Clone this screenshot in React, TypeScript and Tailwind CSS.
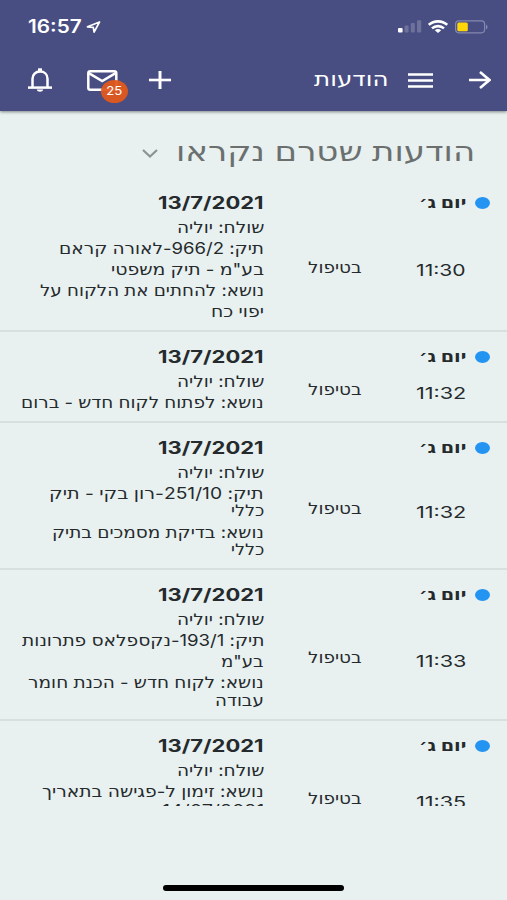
import React, { useLayoutEffect, useRef } from 'react';

type Line = { text: string; width: number; margin?: string };
type Message = { time: string; height: string; lines: Line[] };

const SENDER: Line = { text: 'שולח: יוליה', width: 87 };

const MESSAGES: Message[] = [
  {
    time: '11:30',
    height: 'h-[154px]',
    lines: [
      SENDER,
      { text: 'תיק: 966/2-לאורה קראם', width: 205 },
      { text: 'בע"מ - תיק משפטי', width: 153 },
      { text: 'נושא: להחתים את הלקוח על', width: 224 },
      { text: 'יפוי כח', width: 53 },
    ],
  },
  {
    time: '11:32',
    height: 'h-[91px]',
    lines: [SENDER, { text: 'נושא: לפתוח לקוח חדש - ברום', width: 243 }],
  },
  {
    time: '11:32',
    height: 'h-[147px]',
    lines: [
      SENDER,
      { text: 'תיק: 251/10-רון בקי - תיק', width: 215 },
      { text: 'כללי', width: 33, margin: '-mt-1 mb-px' },
      { text: 'נושא: בדיקת מסמכים בתיק', width: 212 },
      { text: 'כללי', width: 33, margin: '-mt-1' },
    ],
  },
  {
    time: '11:33',
    height: 'h-[151px]',
    lines: [
      SENDER,
      { text: 'תיק: 193/1-נקספלאס פתרונות', width: 243 },
      { text: 'בע"מ', width: 43 },
      { text: 'נושא: לקוח חדש - הכנת חומר', width: 236 },
      { text: 'עבודה', width: 49, margin: '-mt-[3px]' },
    ],
  },
  {
    time: '11:35',
    height: 'h-[131px]',
    lines: [
      SENDER,
      { text: 'נושא: זימון ל-פגישה בתאריך', width: 222 },
      { text: '14/07/2021', width: 102, margin: '-mt-[2px]' },
    ],
  },
];

// Stretches a single line of text horizontally to a given width
function Fit({ width, className = '', children }: { width: number; className?: string; children: React.ReactNode }) {
  const ref = useRef<HTMLSpanElement>(null);

  useLayoutEffect(() => {
    const el = ref.current;
    if (el) el.style.transform = `scaleX(${width / el.offsetWidth})`;
  }, [width]);

  return (
    <span ref={ref} className={`block w-max shrink-0 whitespace-nowrap origin-right ${className}`}>
      {children}
    </span>
  );
}

function StatusBar() {
  return (
    <div dir="ltr" className="flex h-[53px] items-center justify-between pl-7 pr-[19px]">
      <div className="flex items-center">
        <div dir="rtl" className="flex w-[54px]">
          <Fit width={54} className="text-[18px] font-semibold leading-none">16:57</Fit>
        </div>
        <svg className="ml-1 h-3 w-[15px]" viewBox="0 0 15 12" fill="none" stroke="currentColor" strokeWidth="1.7" strokeLinejoin="round">
          <path d="M13.5 1 1.5 5.8l5.8.5.8 4.8z" />
        </svg>
      </div>
      <div className="flex items-center">
        <svg className="h-[13px] w-6" viewBox="0 0 24 13" fill="currentColor">
          <rect x="0" y="8" width="4.6" height="4.5" rx="1" />
          <g opacity=".2">
            <rect x="6.6" y="5.5" width="4" height="7" rx="1" />
            <rect x="12.8" y="3" width="4" height="9.5" rx="1" />
            <rect x="19" y="0.3" width="4.2" height="12.2" rx="1" />
          </g>
        </svg>
        <svg className="ml-1.5 h-[13px] w-5" viewBox="0 0 20 13" fill="none" stroke="currentColor" strokeWidth="2.6">
          <path d="M.8 4.9C6 .2 14 .2 19.2 4.9" />
          <path d="M4 8.4c3.4-3 8.6-3 12 0" />
          <path d="m6.8 10.3 3.2 2.6 3.2-2.6c-1.8-1.6-4.6-1.6-6.4 0z" fill="currentColor" stroke="none" />
        </svg>
        <svg className="ml-[7px] h-[14px] w-[33px]" viewBox="0 0 33 14">
          <rect x=".6" y=".8" width="29" height="12" rx="3.2" fill="none" stroke="#8588b0" strokeWidth="1.2" />
          <rect x="2.3" y="2.4" width="10.5" height="8.8" rx="1.5" fill="#ffd60a" />
          <path d="M31 4.5c2 .8 2 4.2 0 5z" fill="#8588b0" />
        </svg>
      </div>
    </div>
  );
}

function Toolbar() {
  return (
    <div dir="ltr" className="flex h-[58px] items-center pb-1 pl-7">
      <svg className="h-6 w-6" viewBox="0 0 24 24" fill="none" stroke="currentColor" strokeWidth="2.5">
        <path d="M4.5 19.5V10.8C4.5 6.5 7.5 3.6 12 3.6s7.5 2.9 7.5 7.2v8.7" />
        <path d="M0 19.6h24" />
        <path d="M12 .3v3" strokeWidth="4" />
        <path d="M8.8 21.5h6.4c-.3 3-6.1 3-6.4 0z" fill="currentColor" stroke="none" />
      </svg>
      <div className="relative ml-[35px]">
        <svg className="h-[21px] w-[31px]" viewBox="0 0 31 21" fill="none" stroke="currentColor" strokeWidth="2.5">
          <rect x="1.3" y="1.3" width="28" height="18.4" rx="2" />
          <path d="m1.8 3.2 13.4 7.8 13.4-7.8" />
        </svg>
        <div className="absolute left-[14px] top-[10px] flex h-[23px] w-[27px] items-center justify-center rounded-[50%] bg-[#e2591b]/95">
          <span className="scale-x-[1.1] text-[12px] leading-none">25</span>
        </div>
      </div>
      <svg className="ml-[31px] h-[18px] w-[22px]" viewBox="0 0 22 18" fill="none" stroke="currentColor">
        <path d="M11 0v18" strokeWidth="3" />
        <path d="M0 9h22" strokeWidth="2.6" />
      </svg>
      <div dir="rtl" className="ml-[143px] flex w-[75px] pb-0.5">
        <Fit width={75} className="text-[20px] font-medium leading-none">הודעות</Fit>
      </div>
      <svg className="ml-[19px] h-[15px] w-[25px]" viewBox="0 0 25 15" stroke="currentColor" strokeWidth="2.6">
        <path d="M0 1.5h25M0 7.5h25M0 13.5h25" />
      </svg>
      <svg className="ml-[36px] h-[18px] w-[22px]" viewBox="0 0 22 18" fill="none" stroke="currentColor" strokeWidth="2.6">
        <path d="M0 9h20.500M11 1l9.500 8-9.500 8" />
      </svg>
    </div>
  );
}

function MessageRow({ message }: { message: Message }) {
  return (
    <div className={`flex shrink-0 border-b-2 border-[#d8dfdf] pr-[17px] ${message.height}`}>
      <div className="mt-[19px] h-3 w-[15px] rounded-[50%] bg-[#2494f2]" />
      <div className="relative ml-[56px] mr-[9px] w-[48px]">
        <div className="mt-3 flex h-6 items-center">
          <Fit width={47} className="text-[16px] font-bold leading-none">יום ג׳</Fit>
        </div>
        <div className="absolute right-0 top-1/2 mt-2 h-4">
          <Fit width={50} className="text-[16px] leading-none">{message.time}</Fit>
        </div>
      </div>
      <div className="flex w-[54px] items-center pt-[25px]">
        <Fit width={54} className="text-[16px] leading-none">בטיפול</Fit>
      </div>
      <div className="mr-11 mt-[13px] flex flex-col">
        <div className="mb-px flex h-6 items-center">
          <Fit width={106} className="text-[17px] font-bold leading-none">13/7/2021</Fit>
        </div>
        {message.lines.map((line, i) => (
          <div key={i} className={`flex h-[21px] items-center ${line.margin ?? ''}`}>
            <Fit width={line.width} className="text-[16px] leading-none">{line.text}</Fit>
          </div>
        ))}
      </div>
    </div>
  );
}

export default function App() {
  return (
    <div
      dir="rtl"
      className="flex h-[900px] w-[507px] flex-col overflow-hidden bg-[#e8f0f0] font-[Inter,'DejaVu_Sans',sans-serif] text-[#252a2c]"
    >
      <header className="h-[111px] shrink-0 bg-[#484e82] text-white shadow-[0_1px_3px_rgba(0,0,0,0.45)]">
        <StatusBar />
        <Toolbar />
      </header>

      <main className="flex h-[695px] shrink-0 flex-col overflow-hidden">
        <div className="flex h-[67px] shrink-0 items-center pr-8 pt-[13px] text-[#6b706f]">
          <div className="w-[299px]">
            <Fit width={299} className="text-[28px] leading-none">הודעות שטרם נקראו</Fit>
          </div>
          <svg className="mr-[18px] mt-1 h-[9px] w-[16px]" viewBox="0 0 16 9" fill="none" stroke="#8d9392" strokeWidth="2.2">
            <path d="m1 1 7 6.5L15 1" />
          </svg>
        </div>
        {MESSAGES.map((message, i) => (
          <MessageRow key={i} message={message} />
        ))}
      </main>

      <footer className="flex flex-1 items-end justify-center pb-[9px]">
        <div className="h-[6px] w-[181px] rounded-full bg-black" />
      </footer>
    </div>
  );
}
